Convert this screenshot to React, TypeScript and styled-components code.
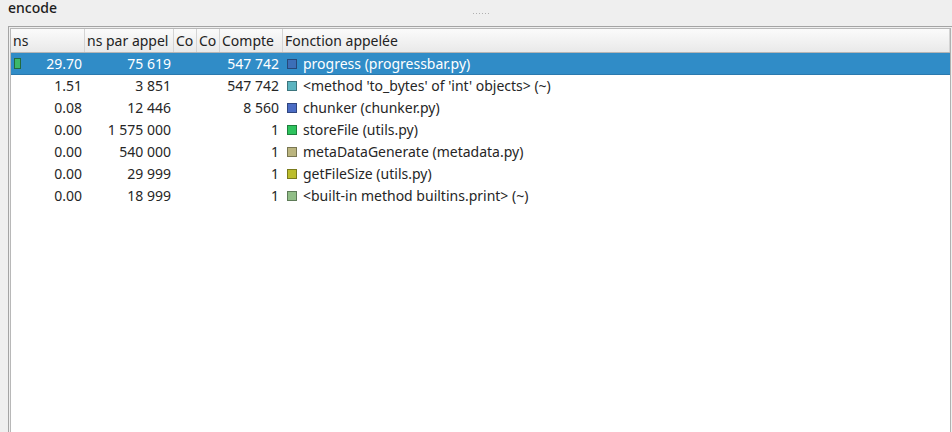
import React from "react";
import styled, { createGlobalStyle } from "styled-components";

const Global = createGlobalStyle`
  html, body { margin: 0; padding: 0; background: #efefef; }
  body { font-family: "Noto Sans", "DejaVu Sans", sans-serif; font-size: 14px; color: #2e3436; }
`;

const Page = styled.div`
  width: 952px;
  height: 432px;
  display: flex;
  flex-direction: column;
  overflow: hidden;
`;

const TopBar = styled.div`
  height: 26px;
  display: grid;
  grid-template-columns: 1fr auto 1fr;
  align-items: start;
`;

const Title = styled.div`
  padding-left: 8px;
  line-height: 15px;
  font-weight: 500;
  color: #1c1c1c;
`;

const Grip = styled.div`
  margin-top: 13px;
  display: flex;
  gap: 2px;
  margin-left: 10px;
`;

const Dot = styled.span`
  width: 1px;
  height: 1px;
  background: #b0b0b0;
`;

const Outer = styled.div`
  flex: 1;
  margin-left: 8px;
  border-top: 1px solid #a4a4a4;
  border-left: 1px solid #a4a4a4;
  padding: 1px 1px 0 1px;
  display: flex;
  min-height: 0;
`;

const Inner = styled.div`
  flex: 1;
  border-top: 1px solid #b8b8b8;
  border-left: 1px solid #b8b8b8;
  border-right: 1px solid #b0b0b0;
  background: #ffffff;
  display: flex;
  flex-direction: column;
`;

const cols = "74px 89px 23px 23px 63px 1fr";

const HeaderRow = styled.div`
  display: grid;
  grid-template-columns: ${cols};
  height: 23px;
  background: linear-gradient(#fbfbfb, #e9e9e9);
  border-bottom: 1px solid #b5b5b5;
`;

const HeaderCell = styled.div`
  padding-left: 2px;
  line-height: 23px;
  white-space: nowrap;
  overflow: hidden;
  border-right: 1px solid #d4d4d4;
  color: #222;
`;

const Row = styled.div<{ $sel?: boolean }>`
  display: grid;
  grid-template-columns: ${cols};
  height: 22px;
  line-height: 21px;
  box-sizing: border-box;
  background: ${(p) => (p.$sel ? "#308cc7" : "transparent")};
  border-bottom: 1px solid ${(p) => (p.$sel ? "#2a79ae" : "transparent")};
  color: ${(p) => (p.$sel ? "#ffffff" : "#262626")};
`;

const Num = styled.div`
  text-align: right;
  padding-right: 3px;
  white-space: nowrap;
  position: relative;
`;

const CountCell = styled(Num)`
  padding-right: 4px;
`;

const Bar = styled.span`
  position: absolute;
  left: 3px;
  top: 5px;
  width: 5px;
  height: 9px;
  background: #3cb86a;
  border: 1px solid #236a3e;
`;

const FuncCell = styled.div`
  display: flex;
  align-items: center;
  padding-left: 4px;
  white-space: nowrap;
`;

const Swatch = styled.span<{ $c: string }>`
  width: 8px;
  height: 8px;
  background: ${(p) => p.$c};
  border: 1px solid rgba(0, 0, 0, 0.35);
  margin-right: 6px;
  flex: none;
`;

const data = [
  { ns: "29.70", per: "75 619", count: "547 742", fn: "progress (progressbar.py)", c: "#3c6fb8", sel: true },
  { ns: "1.51", per: "3 851", count: "547 742", fn: "<method 'to_bytes' of 'int' objects> (~)", c: "#5cb4c0" },
  { ns: "0.08", per: "12 446", count: "8 560", fn: "chunker (chunker.py)", c: "#4b6cc4" },
  { ns: "0.00", per: "1 575 000", count: "1", fn: "storeFile (utils.py)", c: "#2ec35e" },
  { ns: "0.00", per: "540 000", count: "1", fn: "metaDataGenerate (metadata.py)", c: "#bbb57f" },
  { ns: "0.00", per: "29 999", count: "1", fn: "getFileSize (utils.py)", c: "#bcbd2c" },
  { ns: "0.00", per: "18 999", count: "1", fn: "<built-in method builtins.print> (~)", c: "#91be87" },
];

export default function App() {
  return (
    <Page>
      <Global />
      <TopBar>
        <Title>encode</Title>
        <Grip>
          {Array.from({ length: 6 }).map((_, i) => (
            <Dot key={i} />
          ))}
        </Grip>
        <div />
      </TopBar>
      <Outer>
        <Inner>
          <HeaderRow>
            <HeaderCell>ns</HeaderCell>
            <HeaderCell>ns par appel</HeaderCell>
            <HeaderCell>Co</HeaderCell>
            <HeaderCell>Co</HeaderCell>
            <HeaderCell>Compte</HeaderCell>
            <HeaderCell>Fonction appelée</HeaderCell>
          </HeaderRow>
          {data.map((d, i) => (
            <Row key={i} $sel={d.sel}>
              <Num>
                {d.sel && <Bar />}
                {d.ns}
              </Num>
              <Num>{d.per}</Num>
              <div />
              <div />
              <CountCell>{d.count}</CountCell>
              <FuncCell>
                <Swatch $c={d.c} />
                {d.fn}
              </FuncCell>
            </Row>
          ))}
        </Inner>
      </Outer>
    </Page>
  );
}
